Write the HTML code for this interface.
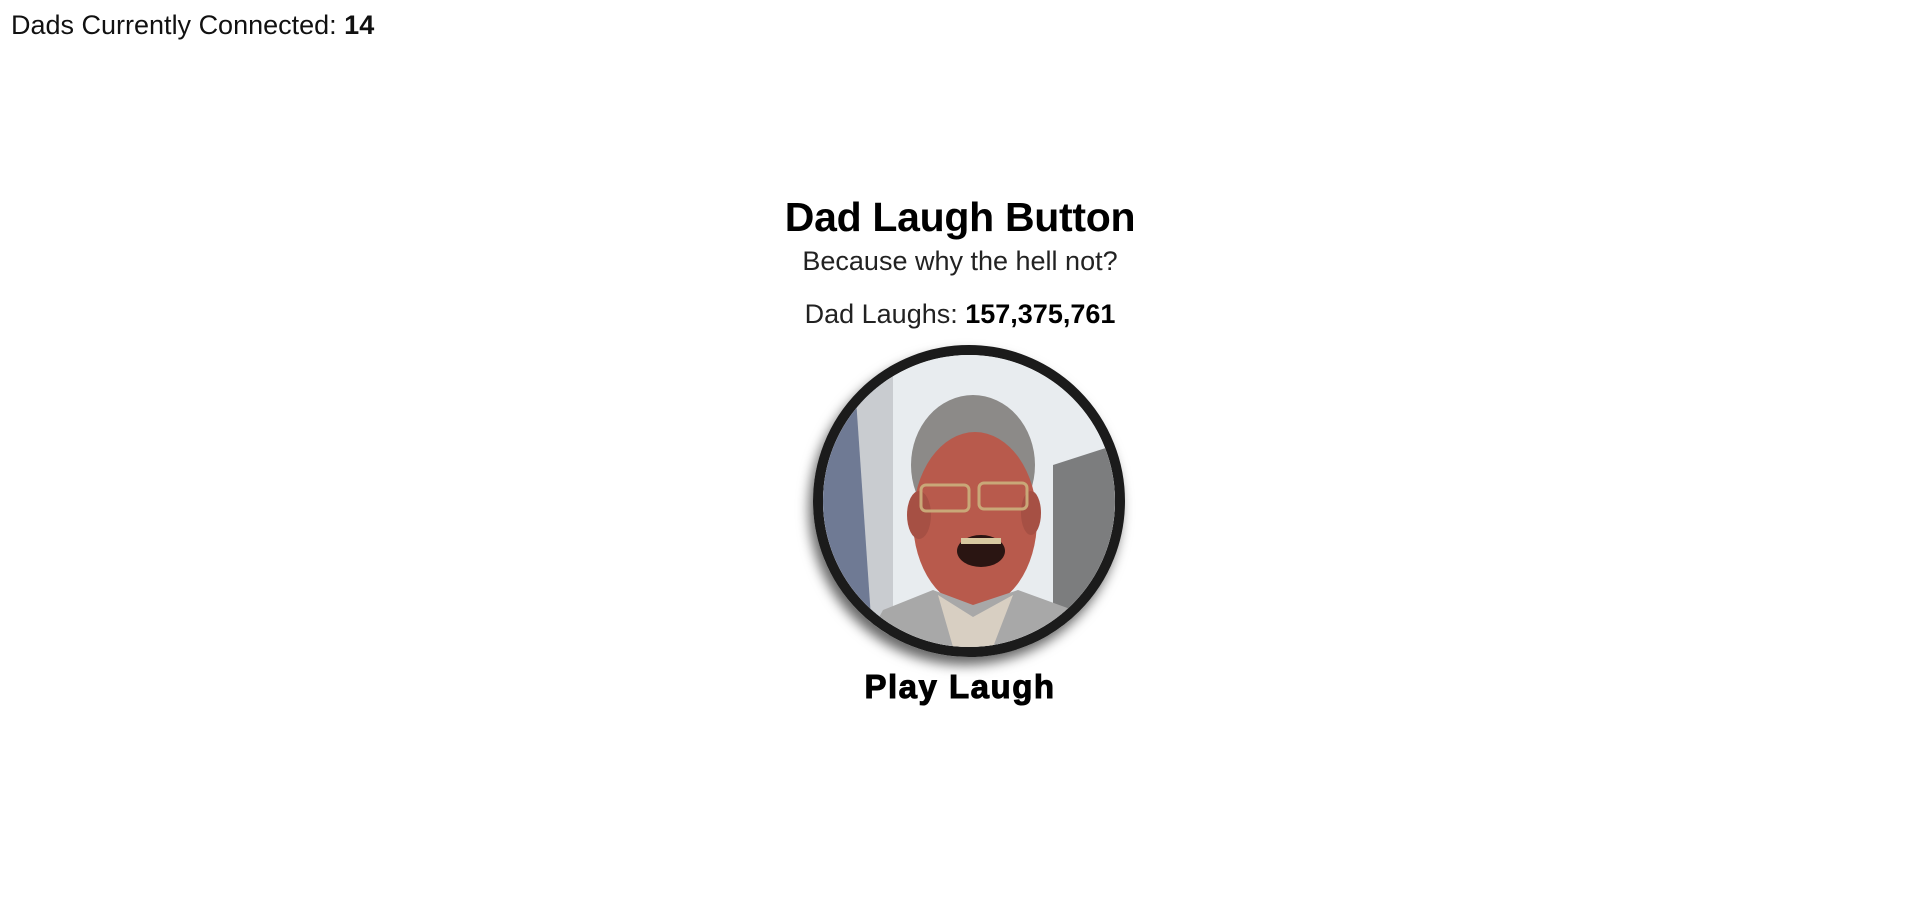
<!DOCTYPE html>
<html><head><style>
html,body{margin:0;padding:0;background:#fff;width:1920px;height:897px;overflow:hidden;font-family:"Liberation Sans",sans-serif;color:#000}
.top{position:absolute;left:11px;top:10px;font-size:27px;font-weight:300;color:#111}
.top b{font-weight:700}
.c{position:absolute;left:0;width:1920px;text-align:center}
h1{margin:0;position:absolute;top:194px;font-size:41px;font-weight:700;letter-spacing:-0.3px}
.sub{top:246px;font-size:27px;color:#222}
.cnt{top:299px;font-size:27px;color:#222}
.cnt b{color:#000}
.circ{position:absolute;left:813px;top:345px;width:292px;height:292px;border:10px solid #1b1b1b;border-radius:50%;overflow:hidden;box-shadow:-4px 8px 12px rgba(0,0,0,.6)}
.play{top:668px;font-size:33px;font-weight:900;letter-spacing:1.5px;-webkit-text-stroke:1px #000}
</style></head><body>
<div class="top">Dads Currently Connected: <b>14</b></div>
<h1 class="c">Dad Laugh Button</h1>
<div class="c sub">Because why the hell not?</div>
<div class="c cnt">Dad Laughs: <b>157,375,761</b></div>
<div class="circ">
<svg width="292" height="292" viewBox="0 0 292 292">
<rect width="292" height="292" fill="#e8ecef"/>
<rect x="0" y="0" width="60" height="292" fill="#6f7a94"/>
<polygon points="30,0 70,0 70,292 50,292" fill="#c9ccd0"/>
<polygon points="230,110 292,90 292,292 230,292" fill="#7c7d7e"/>
<ellipse cx="150" cy="110" rx="62" ry="70" fill="#8c8a88"/>
<ellipse cx="152" cy="165" rx="62" ry="88" fill="#b85a4c"/>
<ellipse cx="96" cy="160" rx="12" ry="24" fill="#a65044"/>
<ellipse cx="208" cy="158" rx="10" ry="22" fill="#a65044"/>
<rect x="98" y="130" width="48" height="26" rx="5" fill="none" stroke="#c9a878" stroke-width="3"/>
<rect x="156" y="128" width="48" height="26" rx="5" fill="none" stroke="#c9a878" stroke-width="3"/>
<ellipse cx="158" cy="196" rx="24" ry="16" fill="#2a1512"/>
<rect x="138" y="183" width="40" height="6" fill="#d8c8a0"/>
<polygon points="40,292 60,255 110,235 150,250 195,235 250,255 270,292" fill="#a8a8a8"/>
<polygon points="115,240 150,262 190,240 170,292 130,292" fill="#d8cfc2"/>
</svg>
</div>
<div class="c play">Play Laugh</div>
</body></html>
